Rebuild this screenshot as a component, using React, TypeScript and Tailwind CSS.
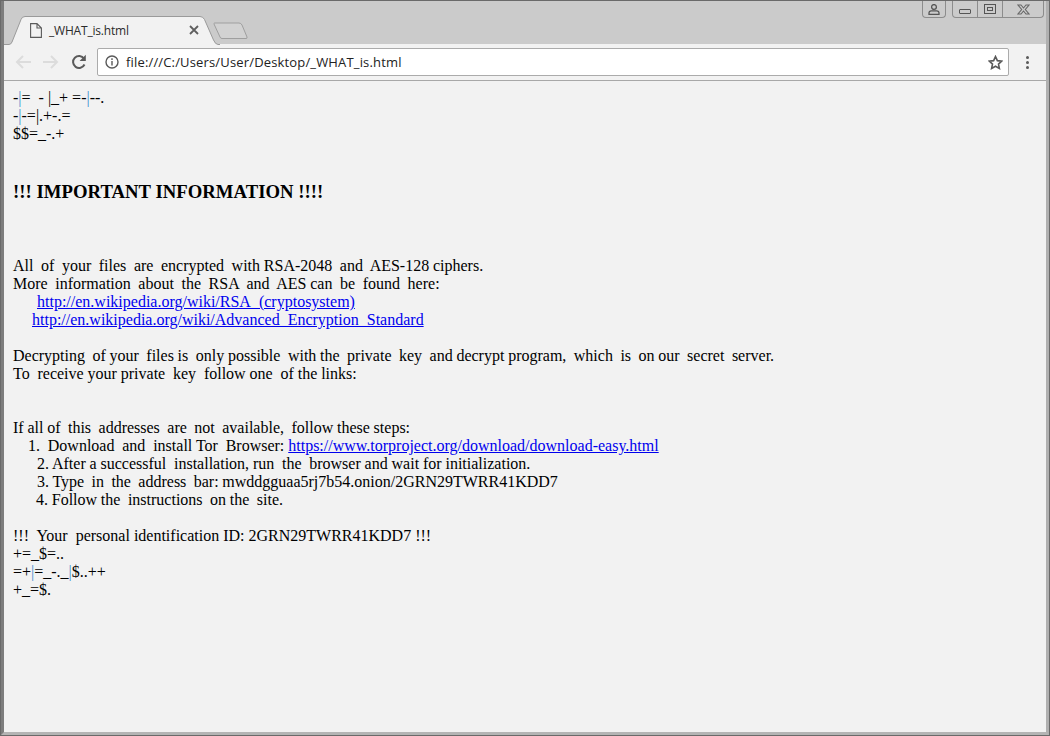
import React from 'react';

const Link = ({ href }: { href: string }) => (
  <a href="#" className="text-[#0000ee] underline">{href}</a>
);

const Line = ({ children, indent = '' }: { children?: React.ReactNode; indent?: string }) => (
  <div className={`h-[18px] leading-[18px] whitespace-pre ${indent}`}>{children}</div>
);

const Cyan = ({ children }: { children: React.ReactNode }) => (
  <span className="text-[#3f8fd0]">{children}</span>
);

const Tab = () => (
  <div className="relative w-[216px] h-[43px] shrink-0">
    <svg className="absolute left-0 top-0" width="216" height="44" viewBox="0 0 216 44">
      <path d="M-2 43.500 H5 Q7 43.500 8 41 L17 18.500 Q18 15.500 21 15.500 H196 Q199 15.500 200.500 18.500 L209.500 39 Q211.500 43.500 214 43.500 H216 V45 H-2 Z" fill="#f2f2f2" stroke="#9a9a9a" strokeWidth="1" />
    </svg>
    <svg className="absolute left-[26px] top-[22px]" width="12" height="15" viewBox="0 0 12 15" fill="none" stroke="#5a5a5a" strokeWidth="1.100">
      <path d="M0.600 0.600 H7 L11.400 5 V14.400 H0.600 Z M7 0.600 V5 H11.400" />
    </svg>
    <span className="absolute left-[45px] top-[21px] text-[12px] leading-[18px] tracking-[-0.2px] text-[#2b2b2b] font-['Open_Sans','Noto_Sans',sans-serif]">_WHAT_is.html</span>
    <svg className="absolute left-[185px] top-[24px]" width="10" height="10" viewBox="0 0 10 10" stroke="#5f5f5f" strokeWidth="1.800">
      <path d="M1 1 L9 9 M9 1 L1 9" />
    </svg>
  </div>
);

const WindowControls = () => (
  <div className="absolute right-[2px] top-0 flex gap-[6px] h-[17px] text-[#555]">
    <div className="w-[24px] h-[17px] border border-t-0 border-[#8c8c8c] rounded-b-[4px] flex items-center justify-center">
      <svg width="12" height="11" viewBox="0 0 12 11" fill="none" stroke="#555" strokeWidth="1.300">
        <circle cx="6" cy="3" r="2.400" />
        <path d="M1 10.300 V8.800 Q1 7 3 6.800 H9 Q11 7 11 8.800 V10.300 Z" />
      </svg>
    </div>
    <div className="flex w-[92px] h-[17px] border border-t-0 border-[#8c8c8c] rounded-b-[4px]">
      <div className="w-[25px] border-r border-[#8c8c8c] flex items-end justify-center pb-[3px]">
        <div className="w-[12px] h-[5px] border border-[#555] rounded-[1px]" />
      </div>
      <div className="w-[25px] border-r border-[#8c8c8c] flex items-center justify-center">
        <div className="w-[12px] h-[10px] border border-[#555] flex items-center justify-center">
          <div className="w-[6px] h-[4px] border border-[#555]" />
        </div>
      </div>
      <div className="flex-1 flex items-center justify-center">
        <svg width="13" height="11" viewBox="0 0 13 11" fill="none" stroke="#666" strokeWidth="1.100">
          <path d="M1 1 H4 L6.500 4 L9 1 H12 L8.300 5.500 L12 10 H9 L6.500 7 L4 10 H1 L4.700 5.500 Z" />
        </svg>
      </div>
    </div>
  </div>
);

const Toolbar = () => (
  <div className="h-[37px] bg-[#f2f2f2] border-b border-[#a8a8a8] flex items-center shrink-0">
    <svg className="ml-[11px]" width="16" height="16" viewBox="0 0 16 16" fill="none" stroke="#dcdcdc" strokeWidth="2">
      <path d="M16 8 H2 M8 2 L2 8 L8 14" />
    </svg>
    <svg className="ml-[12px]" width="16" height="16" viewBox="0 0 16 16" fill="none" stroke="#dcdcdc" strokeWidth="2">
      <path d="M0 8 H14 M8 2 L14 8 L8 14" />
    </svg>
    <svg className="ml-[12px]" width="16" height="16" viewBox="0 0 16 16" fill="none" stroke="#5a5a5a" strokeWidth="2">
      <path d="M13.500 10.500 A6 6 0 1 1 13 4.500" />
      <path d="M14.800 0.800 V7 H8.600 Z" fill="#5a5a5a" stroke="none" />
    </svg>
    <div className="ml-[10px] w-[912px] h-[28px] bg-white border border-[#ababab] rounded-[2px] flex items-center">
      <svg className="ml-[7px]" width="14" height="14" viewBox="0 0 14 14" fill="none" stroke="#5a5a5a" strokeWidth="1.400">
        <circle cx="7" cy="7" r="6" />
        <path d="M7 6 V10.500 M7 3.300 V4.900" />
      </svg>
      <span className="ml-[7px] pt-[1px] text-[13px] tracking-[0.16px] text-[#222] font-['Open_Sans','Noto_Sans',sans-serif]">file:///C:/Users/User/Desktop/_WHAT_is.html</span>
      <svg className="ml-auto mr-[5px]" width="15" height="15" viewBox="0 0 24 24" fill="none" stroke="#5a5a5a" strokeWidth="2.600">
        <path d="M12 2.500 L15 9 L22 9.800 L16.800 14.500 L18.200 21.500 L12 18 L5.800 21.500 L7.200 14.500 L2 9.800 L9 9 Z" />
      </svg>
    </div>
    <div className="ml-[17px] flex flex-col gap-[2px]">
      <div className="w-[3px] h-[3px] rounded-full bg-[#5a5a5a]" />
      <div className="w-[3px] h-[3px] rounded-full bg-[#5a5a5a]" />
      <div className="w-[3px] h-[3px] rounded-full bg-[#5a5a5a]" />
    </div>
  </div>
);

export default function App() {
  return (
    <div className="w-[1050px] h-[736px] bg-[#cbcbcb] border border-[#6a6a6a] flex flex-col overflow-hidden">
      <div className="flex-1 flex flex-col min-h-0 border-[3px] border-t-0 border-l-[#7d7d7d] border-r-[#b0b0b0] border-b-[#b4b4b4]">
        {/* tab strip */}
        <div className="relative h-[43px] shrink-0 flex items-start">
          <Tab />
          <svg className="ml-[-7px] mt-[21px]" width="36" height="18" viewBox="0 0 36 18" fill="#d2d2d2" stroke="#9f9f9f">
            <path d="M1.500 1 H26 Q28 1 29 3 L34 15 Q34.500 16.500 33 16.500 H9 Q7.500 16.500 7 15 L1 2 Q0.800 1 1.500 1 Z" />
          </svg>
          <WindowControls />
        </div>
        <Toolbar />
        {/* page */}
        <div className="flex-1 bg-[#f2f2f2] pt-[8px] pl-[9px] text-black text-[16px] font-['Liberation_Serif',serif]">
          <Line>-<Cyan>|</Cyan>=  - |_+ =-<Cyan>|</Cyan>--.</Line>
          <Line>-<Cyan>|</Cyan>-=|.+-.=</Line>
          <Line>$$=_-.+</Line>
          <h3 className="mt-[38px] mb-[55px] text-[18.720px] leading-[21px] font-bold whitespace-pre tracking-[0.03px]">!!! IMPORTANT INFORMATION !!!!</h3>
          <Line indent="[word-spacing:-0.22px]">All  of  your  files  are  encrypted  with RSA-2048  and  AES-128 ciphers.</Line>
          <Line indent="[word-spacing:-0.21px]">More  information  about  the  RSA  and  AES can  be  found  here:</Line>
          <Line indent="pl-[24px]"><Link href="http://en.wikipedia.org/wiki/RSA_(cryptosystem)" /></Line>
          <Line indent="pl-[19px]"><Link href="http://en.wikipedia.org/wiki/Advanced_Encryption_Standard" /></Line>
          <Line />
          <Line indent="[word-spacing:-0.26px]">Decrypting  of your  files is  only possible  with the  private  key  and decrypt program,  which  is  on our  secret  server.</Line>
          <Line indent="[word-spacing:-0.1px]">To  receive your private  key  follow one  of the links:</Line>
          <Line />
          <Line />
          <Line indent="[word-spacing:-0.26px]">If all of  this  addresses  are  not  available,  follow these steps:</Line>
          <Line indent="pl-[15px] [word-spacing:-0.1px]">1.  Download  and  install Tor  Browser: <Link href="https://www.torproject.org/download/download-easy.html" /></Line>
          <Line indent="pl-[24px] [word-spacing:-0.15px]">2. After a successful  installation, run  the  browser and wait for initialization.</Line>
          <Line indent="pl-[24px] [word-spacing:-0.3px]">3. Type  in  the  address  bar: mwddgguaa5rj7b54.onion/2GRN29TWRR41KDD7</Line>
          <Line indent="pl-[23px] [word-spacing:-0.25px]">4. Follow the  instructions  on the  site.</Line>
          <Line />
          <Line>!!!  Your  personal identification ID: 2GRN29TWRR41KDD7 !!!</Line>
          <Line>+=_$=..</Line>
          <Line>=+<Cyan>|</Cyan>=_-._<Cyan>|</Cyan>$..++</Line>
          <Line>+_=$.</Line>
        </div>
      </div>
    </div>
  );
}
